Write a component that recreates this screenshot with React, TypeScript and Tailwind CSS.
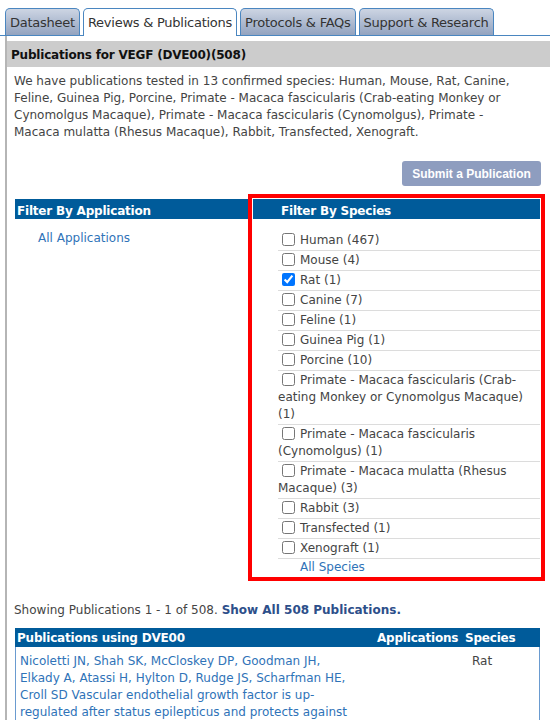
import React from "react";

const species = [
  { name: "Human (467)" },
  { name: "Mouse (4)" },
  { name: "Rat (1)", checked: true },
  { name: "Canine (7)" },
  { name: "Feline (1)" },
  { name: "Guinea Pig (1)" },
  { name: "Porcine (10)" },
  { name: "Primate - Macaca fascicularis (Crab-eating Monkey or Cynomolgus Macaque) (1)" },
  { name: "Primate - Macaca fascicularis (Cynomolgus) (1)" },
  { name: "Primate - Macaca mulatta (Rhesus Macaque) (3)" },
  { name: "Rabbit (3)" },
  { name: "Transfected (1)" },
  { name: "Xenograft (1)" },
];

const tabs = ["Datasheet", "Reviews & Publications", "Protocols & FAQs", "Support & Research"];

const App = () => {
  return (
    <div className="min-h-[720px] w-[550px] overflow-hidden bg-white font-['DejaVu_Sans',sans-serif] text-[12px] text-[#444]">
      {/* Tabs */}
      <div className="flex items-end gap-[3px] border-b border-[#4a86c0] pt-2 pl-[5px]">
        {tabs.map((t, i) =>
          i === 1 ? (
            <div
              key={t}
              className="relative -mb-px h-[28px] rounded-t-[5px] border border-b-0 border-[#4a86c0] bg-white px-[4px] pt-[4px] text-[13px] tracking-[-0.25px] text-[#333]"
            >
              {t}
            </div>
          ) : (
            <div
              key={t}
              className="h-[27px] rounded-t-[5px] border border-b-0 border-[#4a86c0] bg-gradient-to-b from-[#cdd5e3] to-[#93a3bf] px-[4px] pt-[4px] text-[13px] tracking-[-0.25px] text-[#333]"
            >
              {t}
            </div>
          )
        )}
      </div>

      {/* Panel */}
      <div className="ml-[5px] border-l-2 border-[#b5b5b5] pt-[5px]">
        <div className="h-[26px] bg-[#cccccc] pt-[5px] pl-[4px] font-bold tracking-[-0.2px] text-[#111]">
          Publications for VEGF (DVE00)(508)
        </div>

        <p className="mt-[6px] w-[525px] pl-[7px] leading-[17px]">
          We have publications tested in 13 confirmed species: Human, Mouse, Rat, Canine, Feline,
          Guinea Pig, Porcine, Primate - Macaca fascicularis (Crab-eating Monkey or Cynomolgus
          Macaque), Primate - Macaca fascicularis (Cynomolgus), Primate - Macaca mulatta (Rhesus
          Macaque), Rabbit, Transfected, Xenograft.
        </p>

        <div className="mt-[20px] flex justify-end pr-[9px]">
          <button className="h-[25px] w-[139px] rounded-[3px] bg-[#8e9dbf] font-['Liberation_Sans',sans-serif] text-[12px] font-bold text-white">
            Submit a Publication
          </button>
        </div>

        {/* Filters */}
        <div className="mt-[8px] flex items-start pl-[8px]">
          <div className="mt-[5px] w-[233px]">
            <div className="h-[20px] bg-[#005b9a] pt-[3px] pl-[2px] font-bold tracking-[-0.2px] text-white">
              Filter By Application
            </div>
            <div className="mt-[10px] pl-[23px] text-[#2f73b8]">All Applications</div>
          </div>

          <div className="w-[297px] border-4 border-[#ff0000] p-px">
            <div className="h-[20px] bg-[#005b9a] pt-[3px] pl-[28px] font-bold tracking-[-0.2px] text-white">
              Filter By Species
            </div>
            <div className="mt-[12px] pl-[25px]">
              {species.map((s) => (
                <div key={s.name} className="border-b border-[#dcdcdc] py-px leading-[17px]">
                  <input
                    type="checkbox"
                    defaultChecked={s.checked}
                    className="mr-[5px] ml-[4px] h-[13px] w-[13px] align-[-2px]"
                  />
                  {s.name}
                </div>
              ))}
              <div className="pl-[22px] leading-[17px] text-[#2f73b8]">All Species</div>
            </div>
          </div>
        </div>

        <div className="mt-[20px] pl-[7px]">
          Showing Publications 1 - 1 of 508.{" "}
          <span className="font-bold text-[#2d4f8a]">Show All 508 Publications.</span>
        </div>

        {/* Publications table */}
        <div className="mt-[9px] mr-[10px] ml-[8px]">
          <div className="flex h-[19px] items-center bg-[#005b9a] pl-[2px] font-bold tracking-[-0.2px] text-white">
            <div className="flex-1">Publications using DVE00</div>
            <div className="w-[88px]">Applications</div>
            <div className="w-[75px]">Species</div>
          </div>
          <div className="flex border border-t-0 border-[#6a9bd0] pt-[6px] pl-[4px] leading-[17px]">
            <div className="w-[335px] text-[#2f73b8]">
              Nicoletti JN, Shah SK, McCloskey DP, Goodman JH, Elkady A, Atassi H, Hylton D, Rudge
              JS, Scharfman HE, Croll SD Vascular endothelial growth factor is up-regulated after
              status epilepticus and protects against
            </div>
            <div className="ml-[117px]">Rat</div>
          </div>
        </div>
      </div>
    </div>
  );
};

export default App;
